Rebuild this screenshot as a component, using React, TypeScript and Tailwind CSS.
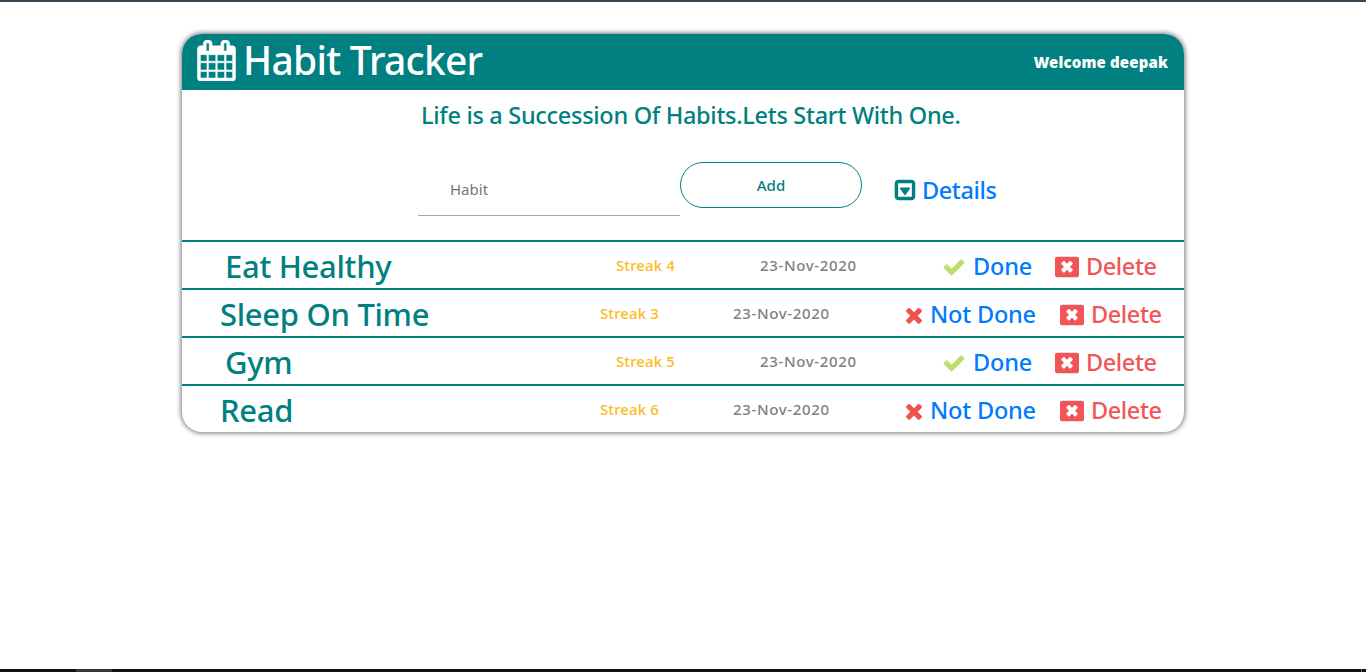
import React from "react";

const paths = {
  calendar:
    "M192 1664h288v-288h-288v288zM544 1664h320v-288h-320v288zM192 1312h288v-320h-288v320zM544 1312h320v-320h-320v320zM192 928h288v-288h-288v288zM928 1664h320v-288h-320v288zM544 928h320v-288h-320v288zM1312 1664h288v-288h-288v288zM928 1312h320v-320h-320v320zM576 448v-288q0-13-9.5-22.5t-22.5-9.5h-64q-13 0-22.5 9.5t-9.5 22.5v288q0 13 9.5 22.5t22.5 9.5h64q13 0 22.5-9.5t9.5-22.5zM1312 1312h288v-320h-288v320zM928 928h320v-288h-320v288zM1312 928h288v-288h-288v288zM1344 448v-288q0-13-9.5-22.5t-22.5-9.5h-64q-13 0-22.5 9.5t-9.5 22.5v288q0 13 9.5 22.5t22.5 9.5h64q13 0 22.5-9.5t9.5-22.5zM1728 384v1280q0 52-38 90t-90 38h-1408q-52 0-90-38t-38-90v-1280q0-52 38-90t90-38h128v-96q0-66 47-113t113-47h64q66 0 113 47t47 113v96h384v-96q0-66 47-113t113-47h64q66 0 113 47t47 113v96h128q52 0 90 38t38 90z",
  check:
    "M1671 566q0 40-28 68l-724 724-136 136q-28 28-68 28t-68-28l-136-136-362-362q-28-28-28-68t28-68l136-136q28-28 68-28t68 28l294 295 656-657q28-28 68-28t68 28l136 136q28 28 28 68z",
  times:
    "M1490 1322q0 40-28 68l-136 136q-28 28-68 28t-68-28l-294-294-294 294q-28 28-68 28t-68-28l-136-136q-28-28-28-68t28-68l294-294-294-294q-28-28-28-68t28-68l136-136q28-28 68-28t68 28l294 294 294-294q28-28 68-28t68 28l136 136q28 28 28 68t-28 68l-294 294 294 294q28 28 28 68z",
  caretSquare:
    "M1273 739q18 35-5 66l-320 448q-19 27-52 27t-52-27l-320-448q-23-31-5-66 17-35 57-35h640q40 0 57 35zM1408 1376v-960q0-13-9.5-22.5t-22.5-9.5h-960q-13 0-22.5 9.5t-9.5 22.5v960q0 13 9.5 22.5t22.5 9.5h960q13 0 22.5-9.5t9.5-22.5zM1664 416v960q0 119-84.5 203.5t-203.5 84.5h-960q-119 0-203.5-84.5t-84.5-203.5v-960q0-119 84.5-203.5t203.5-84.5h960q119 0 203.5 84.5t84.5 203.5z",
  windowClose:
    "M1322 1140l-166 166q-12 12-27 12t-27-12l-206-206-206 206q-12 12-27 12t-27-12l-166-166q-12-12-12-27t12-27l206-206-206-206q-12-12-12-27t12-27l166-166q12-12 27-12t27 12l206 206 206-206q12-12 27-12t27 12l166 166q12 12 12 27t-12 27l-206 206 206 206q12 12 12 27t-12 27zM160 128q-66 0-113 47t-47 113v1216q0 66 47 113t113 47h1472q66 0 113-47t47-113v-1216q0-66-47-113t-113-47z",
};

function Icon({ name, className }: { name: keyof typeof paths; className: string }) {
  return (
    <svg viewBox="0 0 1792 1792" fill="currentColor" fillRule="evenodd" className={`shrink-0 ${className}`}>
      <path d={paths[name]} />
    </svg>
  );
}

const habits = [
  { name: "Eat Healthy", streak: 4, done: true },
  { name: "Sleep On Time", streak: 3, done: false },
  { name: "Gym", streak: 5, done: true },
  { name: "Read", streak: 6, done: false },
];

function HabitRow({ name, streak, done }: { name: string; streak: number; done: boolean }) {
  return (
    <li className="flex h-12 items-center border-t-2 border-[#008080] whitespace-nowrap">
      <h2
        className={`shrink-0 pt-[2px] text-[31px] leading-[38px] tracking-[-0.3px] ${done ? "w-[434px] pl-[43px]" : "w-[418px] pl-[38px]"}`}
      >
        {name}
      </h2>
      <span className={`shrink-0 text-[15px] tracking-[0.1px] text-[#ffb81c] ${done ? "w-[144px]" : "w-[133px]"}`}>
        Streak {streak}
      </span>
      <span className={`shrink-0 text-[15px] tracking-[0.65px] text-[#808080] ${done ? "w-[182px]" : "w-[169px]"}`}>
        23-Nov-2020
      </span>
      <div
        className={`flex shrink-0 items-center pt-[3px] text-[23.5px] tracking-[-0.2px] text-[#007bff] ${done ? "w-[113px]" : "w-[158px]"}`}
      >
        {done ? (
          <Icon name="check" className="mr-[7px] size-6 text-[#b8df70]" />
        ) : (
          <Icon name="times" className="mr-1 size-6 text-[#ef5350]" />
        )}
        <span>{done ? "Done" : "Not Done"}</span>
      </div>
      <div className="flex items-center pt-[3px] text-[23.5px] tracking-[-0.4px] text-[#f15656]">
        <Icon name="windowClose" className="mr-[7px] size-6" />
        <span>Delete</span>
      </div>
    </li>
  );
}

export default function App() {
  return (
    <div className="flex h-[672px] flex-col overflow-hidden bg-white font-['Noto_Sans','Open_Sans',sans-serif] font-medium text-[#008080]">
      <div className="h-0.5 shrink-0 bg-[#36454f]" />
      <main className="mx-auto mt-8 h-[398px] w-[1002px] overflow-hidden rounded-[20px] shadow-[0_0_5px_1px_rgba(0,0,0,0.55)]">
        <header className="flex h-14 items-center justify-between bg-[#008080] pr-4 pl-[14px] text-white">
          <div className="flex items-center">
            <Icon name="calendar" className="-mt-1 mr-1.5 size-[41px] stroke-current stroke-[24]" />
            <h1 className="-mt-[5px] text-[39px] leading-[48px] tracking-[-0.75px]">Habit Tracker</h1>
          </div>
          <span className="text-[15px] font-black tracking-[0.15px]">Welcome deepak</span>
        </header>
        <h4 className="mt-[11px] pl-[239px] text-[23.5px] leading-[29px] tracking-[-0.3px]">
          Life is a Succession Of Habits.Lets Start With One.
        </h4>
        <form className="mt-8 flex h-[78px] items-start pl-[236px]">
          <input
            placeholder="Habit"
            className="h-[54px] w-[262px] border-b border-[#aaaaaa] px-8 text-[15px] font-normal outline-none placeholder:text-[#757575]"
          />
          <button type="button" className="h-[46px] w-[182px] rounded-[23px] border border-[#008080] text-[15px]">
            Add
          </button>
          <div className="mt-3 ml-[31px] flex items-center text-[23.5px] leading-8 tracking-[-0.4px] text-[#007bff]">
            <Icon name="caretSquare" className="mr-[5px] size-6 text-[#008080]" />
            <span>Details</span>
          </div>
        </form>
        <ul>
          {habits.map((habit) => (
            <HabitRow key={habit.name} {...habit} />
          ))}
        </ul>
      </main>
      <footer className="mt-auto flex h-[3px] shrink-0 bg-[#101112]">
        <div className="ml-[76px] w-9 bg-[#343536]" />
        <div className="mr-1 ml-auto w-px bg-[#66686a]" />
      </footer>
    </div>
  );
}
